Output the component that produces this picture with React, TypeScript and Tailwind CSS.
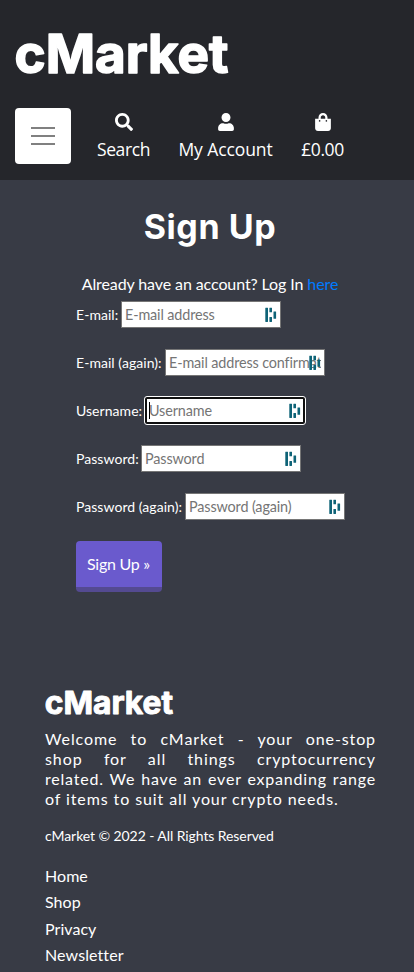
import { FaSearch, FaUser, FaShoppingBag } from "react-icons/fa";

type FieldProps = {
  label: string;
  labelWidth: string;
  placeholder: string;
  type?: string;
  focused?: boolean;
};

function VaultIcon() {
  return (
    <svg
      className="pointer-events-none absolute right-[4px] top-[6px]"
      width="12"
      height="16"
      viewBox="0 0 12 16"
      fill="#0e6377"
    >
      <rect x="0.3" y="0.7" width="2.7" height="14.3" rx="0.4" />
      <rect x="4.4" y="0.7" width="2.6" height="4.6" rx="0.4" />
      <rect x="4.4" y="9.9" width="2.6" height="5.1" rx="0.4" />
      <rect x="8.5" y="4.4" width="2.6" height="7.4" rx="0.4" />
    </svg>
  );
}

function Logo({ className }: { className: string }) {
  return (
    <svg className={className} viewBox="0 0 220 70" role="img" aria-label="cMarket">
      <text
        x="-0.5"
        y="53"
        textLength="214"
        lengthAdjust="spacingAndGlyphs"
        className="font-[Inter,sans-serif] text-[53px] font-bold"
        fill="#fff"
        stroke="#fff"
        strokeWidth="1.6"
        strokeLinejoin="round"
      >
        cMarket
      </text>
    </svg>
  );
}

function Field({ label, labelWidth, placeholder, type = "text", focused }: FieldProps) {
  return (
    <div className="flex h-[27px] items-center">
      <label className={`${labelWidth} shrink-0 whitespace-nowrap text-[14px] leading-[27px] tracking-[0.05px]`}>
        {label}
      </label>
      <div className="relative h-[27px] w-[160px] shrink-0">
        <input
          type={type}
          placeholder={placeholder}
          className={
            focused
              ? "block h-[27px] w-[160px] rounded-[2px] border-2 border-[#101010] bg-white px-[2px] text-[14.4px] tracking-[-0.13px] text-black outline-1 outline-white placeholder:text-[#757575]"
              : "block h-[27px] w-[160px] border border-[#767676] bg-white px-[3px] text-[14.4px] tracking-[-0.13px] text-black placeholder:text-[#757575]"
          }
        />
        {focused && <span className="absolute left-[4px] top-[5px] h-[17px] w-px bg-black" />}
        <VaultIcon />
      </div>
    </div>
  );
}

export default function App() {
  return (
    <div className="h-[972px] w-[414px] overflow-hidden bg-[#383b45] font-[Lato,sans-serif] text-white">
      <header className="h-[180px] bg-[#25262b] pl-[15px]">
        <div className="h-[108px] pt-[20px]">
          <Logo className="block h-[70px] w-[220px]" />
        </div>
        <div className="flex font-['Open_Sans',sans-serif]">
          <button className="flex h-[56px] w-[56px] flex-col items-center justify-center gap-[6px] rounded-[4px] bg-white">
            <span className="h-[2px] w-[24px] bg-[#808080]" />
            <span className="h-[2px] w-[24px] bg-[#808080]" />
            <span className="h-[2px] w-[24px] bg-[#808080]" />
          </button>
          <a className="ml-[26px] flex w-[53px] flex-col items-center pt-[5px]">
            <FaSearch size={18} />
            <span className="mt-[6px] whitespace-nowrap text-[17.5px] leading-[24px] tracking-[-0.4px]">Search</span>
          </a>
          <a className="ml-[28px] flex w-[95px] flex-col items-center pt-[5px]">
            <FaUser size={18} />
            <span className="mt-[6px] whitespace-nowrap text-[17.5px] leading-[24px] tracking-[-0.1px]">
              My Account
            </span>
          </a>
          <a className="ml-[28px] flex w-[43px] flex-col items-center pt-[5px]">
            <FaShoppingBag size={18} />
            <span className="mt-[6px] whitespace-nowrap text-[17.5px] leading-[24px] tracking-[-0.4px]">£0.00</span>
          </a>
        </div>
      </header>

      <main className="h-[505px]">
        <h1 className="pl-[6px] pt-[25px] text-center font-[Inter,sans-serif] text-[34px] font-bold leading-[44px] tracking-[0.6px]">
          Sign Up
        </h1>
        <p className="pl-[6px] pt-[23px] text-center text-[16px] leading-[24px] tracking-[-0.1px]">
          Already have an account? Log In <a className="text-[#007bff]">here</a>
        </p>
        <form className="flex flex-col gap-[21px] pl-[76px] pt-[5px]">
          <Field label="E-mail:" labelWidth="w-[45px]" placeholder="E-mail address" />
          <Field label="E-mail (again):" labelWidth="w-[89px]" placeholder="E-mail address confirmation" />
          <Field label="Username:" labelWidth="w-[69px]" placeholder="Username" focused />
          <Field label="Password:" labelWidth="w-[65px]" placeholder="Password" type="password" />
          <Field label="Password (again):" labelWidth="w-[109px]" placeholder="Password (again)" type="password" />
          <button
            type="button"
            className="h-[51px] w-[86px] rounded-[4px] border-b-[5px] border-[#544a91] bg-[#6a5acd] pr-[1px] text-[16px] tracking-[-0.25px]"
          >
            Sign Up »
          </button>
        </form>
      </main>

      <footer className="pl-[45px]">
        <div className="h-[47px]">
          <Logo className="-mt-[3px] block h-[42px] w-[132px]" />
        </div>
        <p className="w-[331px] whitespace-nowrap text-[16px] leading-[20px] tracking-[0.9px]">
          <span className="block [text-align-last:justify]">Welcome to cMarket - your one-stop </span>
          <span className="block [text-align-last:justify]">shop for all things cryptocurrency </span>
          <span className="block tracking-[0.8px] [text-align-last:justify]">related. We have an ever expanding range </span>
          <span className="block">of items to suit all your crypto needs.</span>
        </p>
        <p className="mt-[16px] text-[14px] leading-[21px] tracking-[-0.08px]">cMarket © 2022 - All Rights Reserved</p>
        <nav className="mt-[17px] flex flex-col text-[16px] leading-[26.3px] tracking-[0.05px]">
          <a>Home</a>
          <a>Shop</a>
          <a>Privacy</a>
          <a className="tracking-[0.1px]">Newsletter</a>
        </nav>
      </footer>
    </div>
  );
}
